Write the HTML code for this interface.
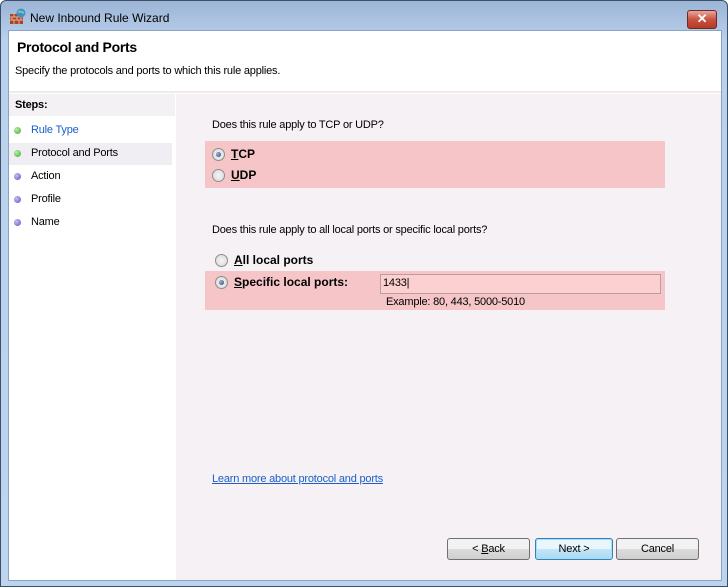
<!DOCTYPE html>
<html><head><style>
body{margin:0;width:728px;height:587px;overflow:hidden;font-family:"Liberation Sans",sans-serif;font-size:11px;letter-spacing:-0.2px;color:#000}
.frame{position:absolute;left:0;top:0;width:726px;height:585px;border:1px solid #3b4f66;border-radius:6px 6px 0 0;background:linear-gradient(#9db5d6,#b9d1ec 40px,#bcd4ee);}
.title{position:absolute;left:30px;top:11px;font-size:12px;letter-spacing:0;color:#000}
.close{position:absolute;left:687px;top:10px;width:28px;height:17px;border:1px solid #6b2a22;border-radius:3px;background:linear-gradient(#e9a79c,#c9523f 50%,#b73a28);color:#fff;font-weight:bold;text-align:center;line-height:16px;font-size:13px}
.client{position:absolute;left:8px;top:30px;width:712px;height:549px;background:#fff;border:1px solid #8aa3c2}
.hdr{position:absolute;left:0;top:0;width:712px;height:60px;background:#fff}
.sep{position:absolute;left:0;top:60px;width:712px;height:2px;background:#eeeaf0}
.left{position:absolute;left:0;top:63px;width:166px;height:486px;background:#fff}
.right{position:absolute;left:167px;top:63px;width:545px;height:486px;background:#f5f1f5}
.abs{position:absolute;white-space:nowrap}
.dot{position:absolute;width:7px;height:7px;border-radius:50%}
.g{background:radial-gradient(circle at 35% 35%,#b8f0a0,#3aa83a)}
.p{background:radial-gradient(circle at 35% 35%,#c8c0f8,#5a4fc0)}
.pink{position:absolute;background:#f5c5c8}
.radio{position:absolute;width:11px;height:11px;border-radius:50%;border:1px solid #8d8d8d;background:radial-gradient(#f4f4f4,#d8d8d8)}
.radio.on::after{content:"";position:absolute;left:3px;top:3px;width:5px;height:5px;border-radius:50%;background:radial-gradient(circle at 35% 35%,#a0b4d8,#2a3f6a)}
.btn{position:absolute;width:81px;height:20px;border:1px solid #707070;border-radius:3px;background:linear-gradient(#f2f2f2 50%,#dcdcdc 50%,#cfcfcf);text-align:center;line-height:20px}
.lbl{font-size:12px;font-weight:bold;letter-spacing:0}
u{text-decoration:underline}
</style></head><body>
<div class="frame"></div>
<svg class="abs" style="left:9px;top:8px" width="18" height="17" viewBox="0 0 18 17"><rect x="1" y="6" width="13" height="10" fill="#a8442c"/><path d="M1 9h13M1 12h13M5 6v3M10 6v3M3 9v3M8 9v3M12 9v3M5 12v4M10 12v4" stroke="#e7b08a" stroke-width="1"/><circle cx="12" cy="5" r="4.5" fill="#3f8fd8"/><path d="M9 4c2-1 4 0 6 1" stroke="#7ed07a" stroke-width="2" fill="none"/></svg>
<div class="title">New Inbound Rule Wizard</div>
<div class="close">✕</div>
<div class="client">
 <div class="hdr">
  <div class="abs" style="left:8px;top:8px;font-size:14px;font-weight:bold;letter-spacing:-0.3px">Protocol and Ports</div>
  <div class="abs" style="left:6px;top:34px">Specify the protocols and ports to which this rule applies.</div>
 </div>
 <div class="sep"></div>
 <div class="left">
  <div class="abs" style="left:0;top:0;width:166px;height:22px;background:#f3f1f4"></div>
  <div class="abs" style="left:6px;top:5px;font-weight:bold">Steps:</div>
  <div class="dot g" style="left:5px;top:33px"></div><div class="abs" style="left:22px;top:30px;color:#1a5ec9">Rule Type</div>
  <div class="abs" style="left:0;top:49px;width:163px;height:22px;background:#f0eef2"></div>
  <div class="dot g" style="left:5px;top:56px"></div><div class="abs" style="left:22px;top:53px">Protocol and Ports</div>
  <div class="dot p" style="left:5px;top:79px"></div><div class="abs" style="left:22px;top:76px">Action</div>
  <div class="dot p" style="left:5px;top:102px"></div><div class="abs" style="left:22px;top:99px">Profile</div>
  <div class="dot p" style="left:5px;top:125px"></div><div class="abs" style="left:22px;top:122px">Name</div>
 </div>
 <div class="right">
  <div class="abs" style="left:36px;top:25px">Does this rule apply to TCP or UDP?</div>
  <div class="pink" style="left:29px;top:47px;width:460px;height:47px"></div>
  <div class="radio on" style="left:36px;top:54px"></div><div class="abs lbl" style="left:55px;top:53px"><u>T</u>CP</div>
  <div class="radio" style="left:36px;top:75px"></div><div class="abs lbl" style="left:55px;top:74px"><u>U</u>DP</div>
  <div class="abs" style="left:36px;top:130px">Does this rule apply to all local ports or specific local ports?</div>
  <div class="radio" style="left:39px;top:160px"></div><div class="abs lbl" style="left:58px;top:159px"><u>A</u>ll local ports</div>
  <div class="pink" style="left:29px;top:177px;width:460px;height:39px"></div>
  <div class="radio on" style="left:39px;top:182px"></div><div class="abs lbl" style="left:58px;top:181px"><u>S</u>pecific local ports:</div>
  <div class="abs" style="left:204px;top:180px;width:279px;height:18px;background:#fccfd0;border:1px solid #b89ea0"></div>
  <div class="abs" style="left:207px;top:183px">1433|</div>
  <div class="abs" style="left:210px;top:202px">Example: 80, 443, 5000-5010</div>
  <div class="abs" style="left:36px;top:379px;color:#1a5ec9;text-decoration:underline">Learn more about protocol and ports</div>
  <div class="btn" style="left:271px;top:444px"><span>&lt; <u>B</u>ack</span></div>
  <div class="btn" style="left:359px;top:444px;width:76px;border-color:#3c7fb1;background:linear-gradient(#eaf6fd 50%,#c4e5f6 50%,#a9d9f2);box-shadow:inset 0 0 0 1px #9fe0fb">Next &gt;</div>
  <div class="btn" style="left:440px;top:444px">Cancel</div>
 </div>
</div>
</body></html>
